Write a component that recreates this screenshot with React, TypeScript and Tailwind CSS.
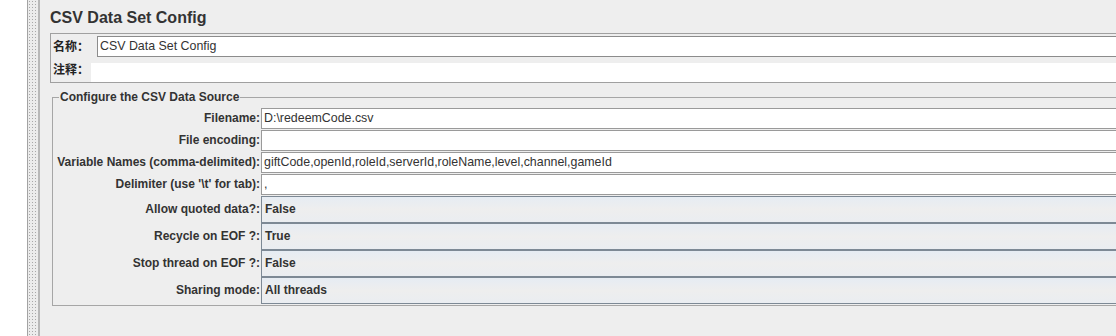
const font = { fontFamily: '"Liberation Sans", Arial, "Noto Sans CJK SC", sans-serif' };

const textRows = [
  { label: "Filename:", value: "D:\\redeemCode.csv" },
  { label: "File encoding:", value: "" },
  { label: "Variable Names (comma-delimited):", value: "giftCode,openId,roleId,serverId,roleName,level,channel,gameId" },
  { label: "Delimiter (use '\\t' for tab):", value: "," },
];

const comboRows = [
  { label: "Allow quoted data?:", value: "False" },
  { label: "Recycle on EOF ?:", value: "True" },
  { label: "Stop thread on EOF ?:", value: "False" },
  { label: "Sharing mode:", value: "All threads" },
];

export default function App() {
  return (
    <div className="w-[1116px] h-[336px] flex bg-white overflow-hidden text-[#333]" style={font}>
      {/* tree side, mostly cropped out */}
      <div className="w-[27px] shrink-0 bg-white" />

      {/* splitter */}
      <div className="w-[13px] shrink-0 border-l border-r-2 border-l-[#a3a3a3] border-r-[#b8b8b8] bg-[#ececec] bg-[radial-gradient(#a8a8a8_0.8px,transparent_0.9px)] bg-[length:3px_3px]" />

      {/* editor panel */}
      <div className="flex-1 bg-[#eeeeee] overflow-hidden pl-[10px]">
        <h1 className="mt-[8px] h-[20px] leading-[20px] text-[16px] font-bold text-[#333]">CSV Data Set Config</h1>

        {/* name / comment */}
        <div className="mt-[5px] w-[1080px] border border-[#a0a0a0] text-[12px]">
          <div className="flex items-center h-[23px] pt-[2px]">
            <span className="w-[46px] pl-[2px] font-bold text-[#222]">名称：</span>
            <div className="flex-1 h-[21px] leading-[19px] border border-[#8c8c8c] bg-white pl-[2px] text-[12.4px] text-[#333]">
              CSV Data Set Config
            </div>
          </div>
          <div className="flex items-center h-[25px]">
            <span className="w-[40px] pl-[2px] font-bold text-[#222]">注释：</span>
            <div className="flex-1 h-[19px] mt-[5px] bg-white" />
          </div>
        </div>

        {/* CSV data source group */}
        <fieldset className="mt-[7px] ml-[2px] w-[1080px] border border-[#a6a6a6] pb-[1px] text-[12px]">
          <legend className="ml-[6px] px-[1px] font-bold text-[12px] leading-[14px] text-[#333]">
            Configure the CSV Data Source
          </legend>
          <div className="mt-[4px] grid grid-cols-[208px_1fr] gap-y-[1px]">
            {textRows.map((r) => (
              <div key={r.label} className="contents">
                <div className="h-[21px] leading-[21px] text-right pr-[1px] font-bold text-[#333]">{r.label}</div>
                <div className="h-[21px] leading-[19px] border border-[#9a9a9a] bg-white pl-[2px] text-[12.4px] text-[#333]">{r.value}</div>
              </div>
            ))}
          </div>
          <div className="mt-[1px] grid grid-cols-[208px_1fr]">
            {comboRows.map((r) => (
              <div key={r.label} className="contents">
                <div className="h-[27px] leading-[27px] text-right pr-[1px] font-bold text-[#333]">{r.label}</div>
                <div className="h-[27px] leading-[25px] border border-[#7d8995] bg-gradient-to-b from-[#e6ecf3] via-[#eeeeee] to-[#eaedf1] pl-[3px] font-bold text-[#333]">
                  {r.value}
                </div>
              </div>
            ))}
          </div>
        </fieldset>
      </div>
    </div>
  );
}
